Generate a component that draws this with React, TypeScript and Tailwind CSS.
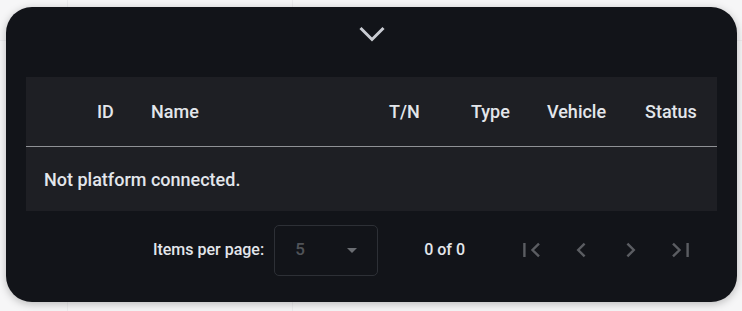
import React from 'react'

const columns = [
  { label: '', width: 'w-[71px]' },
  { label: 'ID', width: 'w-[54px]' },
  { label: 'Name', width: 'w-[238px]' },
  { label: 'T/N', width: 'w-[82px]' },
  { label: 'Type', width: 'w-[76px]' },
  { label: 'Vehicle', width: 'w-[98px]' },
  { label: 'Status', width: 'flex-1' },
]

function PageIcon({ kind }: { kind: 'first' | 'prev' | 'next' | 'last' }) {
  return (
    <svg width="24" height="24" viewBox="0 0 24 24" fill="none" stroke="#5b5d62" strokeWidth="2.4">
      {kind === 'first' && (
        <>
          <line x1="5.4" y1="5" x2="5.4" y2="19" />
          <polyline points="20,5.6 13.5,12 20,18.4" />
        </>
      )}
      {kind === 'prev' && <polyline points="15.6,5.6 9.2,12 15.6,18.4" />}
      {kind === 'next' && <polyline points="8.4,5.6 14.8,12 8.4,18.4" />}
      {kind === 'last' && (
        <>
          <polyline points="4,5.6 10.5,12 4,18.4" />
          <line x1="18.6" y1="5" x2="18.6" y2="19" />
        </>
      )}
    </svg>
  )
}

export default function App() {
  return (
    <div
      className="relative w-[742px] h-[311px] bg-[#f6f6f7] overflow-hidden"
      style={{ fontFamily: 'Roboto, "Liberation Sans", sans-serif' }}
    >
      {/* faint grid lines behind the panel */}
      <div className="absolute left-[67px] top-0 h-full w-px bg-[#ececee]" />
      <div className="absolute left-[292px] top-0 h-full w-px bg-[#ececee]" />
      <div className="absolute left-0 top-[40px] w-full h-px bg-[#ececee]" />

      <div className="relative ml-[6px] mr-[5px] mt-[7px] h-[295px] rounded-[26px] bg-[#121419] shadow-[0_2px_8px_rgba(0,0,0,0.25)] flex flex-col">
        {/* collapse toggle */}
        <div className="h-[70px] flex justify-center pt-[11px]">
          <svg width="32" height="32" viewBox="0 0 32 32" fill="none" stroke="#c9ccd2" strokeWidth="3">
            <polyline points="4.5,10 16,21.5 27.5,10" />
          </svg>
        </div>

        {/* table */}
        <div className="mx-5 bg-[#1e1f24] text-[#e3e6eb] text-[18px] font-medium">
          <div className="flex items-center h-[70px] border-b border-[#8f9195]">
            {columns.map((c, i) => (
              <div key={i} className={`${c.width} whitespace-nowrap`}>
                {c.label}
              </div>
            ))}
          </div>
          <div className="h-[64px] flex items-center pl-[18px]">Not platform connected.</div>
        </div>

        {/* paginator */}
        <div className="h-[78px] flex items-center justify-end pr-[31px] text-[#e3e6eb] font-medium">
          <span className="text-[16px]">Items per page:</span>
          <div className="ml-[10px] w-[104px] h-[51px] rounded-[5px] border border-[#2d3036] flex items-center justify-between pl-[20px] pr-[20px]">
            <span className="text-[17px] text-[#505358]">5</span>
            <svg width="10" height="5" viewBox="0 0 10 5">
              <polygon points="0,0 10,0 5,5" fill="#6a6d72" />
            </svg>
          </div>
          <span className="ml-[46px] text-[16px]">0 of 0</span>
          <div className="ml-[41px] flex">
            <div className="w-[50px] flex justify-center">
              <PageIcon kind="first" />
            </div>
            <div className="w-[50px] flex justify-center">
              <PageIcon kind="prev" />
            </div>
            <div className="w-[50px] flex justify-center">
              <PageIcon kind="next" />
            </div>
            <div className="w-[50px] flex justify-center">
              <PageIcon kind="last" />
            </div>
          </div>
        </div>
      </div>
    </div>
  )
}
